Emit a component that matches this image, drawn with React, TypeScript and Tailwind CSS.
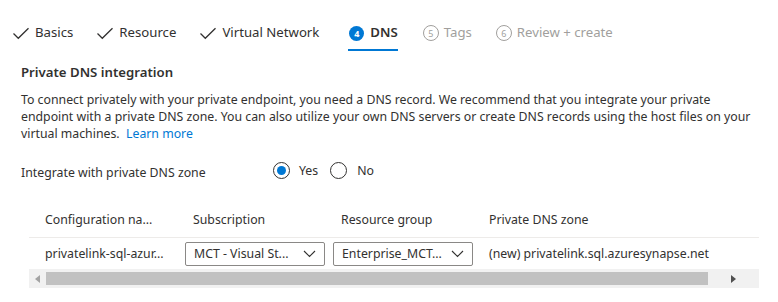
import React from "react";

const Check = () => (
  <svg width="16" height="13" viewBox="0 0 16 13" className="shrink-0">
    <path d="M0.5 6.5 L5.3 11.3 L15.5 1.2" fill="none" stroke="#323130" strokeWidth="1.3" />
  </svg>
);

const Chevron = () => (
  <svg width="13" height="8" viewBox="0 0 13 8" className="shrink-0">
    <path d="M1 1 L6.5 6.5 L12 1" fill="none" stroke="#323130" strokeWidth="1.1" />
  </svg>
);

function Dropdown({ text }: { text: string }) {
  return (
    <div className="flex h-[24px] w-[140px] items-center justify-between rounded-[2px] border border-[#8a8886] bg-white pl-[8px] pr-[8px]">
      <span className="truncate">{text}</span>
      <Chevron />
    </div>
  );
}

export default function App() {
  return (
    <div
      className="h-[302px] w-[778px] overflow-hidden bg-white text-[12.3px] text-[#323130]"
      style={{ fontFamily: '"Segoe UI", "Noto Sans", sans-serif' }}
    >
      {/* Tabs */}
      <div className="flex h-[51px] items-end pl-[13px] text-[13.2px]">
        <div className="flex items-center">
          <div className="flex h-[34px] items-center gap-[6px] border-b-2 border-transparent">
            <Check />
            <span>Basics</span>
          </div>
          <div className="ml-[24px] flex h-[34px] items-center gap-[6px] border-b-2 border-transparent">
            <Check />
            <span>Resource</span>
          </div>
          <div className="ml-[24px] flex h-[34px] items-center gap-[6px] border-b-2 border-transparent">
            <Check />
            <span>Virtual Network</span>
          </div>
          <div className="ml-[29px] flex h-[34px] items-center gap-[6px] border-b-2 border-[#0078d4] pl-[1px]">
            <span className="flex h-[15px] w-[15px] items-center justify-center rounded-full bg-[#0078d4] text-[9px] font-bold leading-none text-white">
              4
            </span>
            <span className="font-semibold">DNS</span>
          </div>
          <div className="ml-[25px] flex h-[34px] items-center gap-[5px] border-b-2 border-transparent text-[#a19f9d]">
            <span className="flex h-[16px] w-[16px] items-center justify-center rounded-full border border-[#a19f9d] text-[9px] leading-none">
              5
            </span>
            <span>Tags</span>
          </div>
          <div className="ml-[24px] flex h-[34px] items-center gap-[5px] border-b-2 border-transparent text-[#a19f9d]">
            <span className="flex h-[16px] w-[16px] items-center justify-center rounded-full border border-[#a19f9d] text-[9px] leading-none">
              6
            </span>
            <span>Review + create</span>
          </div>
        </div>
      </div>

      {/* Section */}
      <div className="pl-[21px]">
        <div className="mt-[12px] text-[13.2px] font-semibold leading-[18px]">Private DNS integration</div>
        <p className="mt-[10px] leading-[17px]">
          To connect privately with your private endpoint, you need a DNS record. We recommend that you integrate your private
          <br />
          endpoint with a private DNS zone. You can also utilize your own DNS servers or create DNS records using the host files on your
          <br />
          virtual machines.&nbsp;&nbsp;<span className="text-[#0078d4]">Learn more</span>
        </p>

        <div className="mt-[17px] flex items-center">
          <span className="mt-[5px] w-[252px]">Integrate with private DNS zone</span>
          <div className="flex items-center">
            <span className="flex h-[17px] w-[17px] items-center justify-center rounded-full border border-[#323130]">
              <span className="h-[9px] w-[9px] rounded-full bg-[#0078d4]" />
            </span>
            <span className="ml-[9px]">Yes</span>
            <span className="ml-[12px] h-[17px] w-[17px] rounded-full border border-[#323130]" />
            <span className="ml-[10px]">No</span>
          </div>
        </div>
      </div>

      {/* Table */}
      <div className="ml-[29px] mt-[21px] w-[730px]">
        <div className="flex h-[35px] items-center border-b border-[#edebe9] pl-[16px]">
          <div className="w-[148px] truncate">Configuration na...</div>
          <div className="w-[148px]">Subscription</div>
          <div className="w-[148px]">Resource group</div>
          <div>Private DNS zone</div>
        </div>
        <div className="flex h-[31px] items-center pl-[16px]">
          <div className="w-[140px] truncate">privatelink-sql-azur...</div>
          <div className="w-[148px]">
            <Dropdown text="MCT - Visual St..." />
          </div>
          <div className="w-[156px]">
            <Dropdown text="Enterprise_MCT..." />
          </div>
          <div>(new) privatelink.sql.azuresynapse.net</div>
        </div>
        {/* scrollbar */}
        <div className="flex h-[19px] items-center bg-[#f1f1f1]">
          <div className="flex w-[17px] items-center justify-center">
            <svg width="5" height="8" viewBox="0 0 5 8">
              <path d="M5 0 L0 4 L5 8 Z" fill="#a3a3a3" />
            </svg>
          </div>
          <div className="h-[13px] w-[662px] bg-[#c1c1c1]" />
          <div className="flex flex-1 items-center justify-center">
            <svg width="5" height="8" viewBox="0 0 5 8">
              <path d="M0 0 L5 4 L0 8 Z" fill="#505050" />
            </svg>
          </div>
        </div>
      </div>
    </div>
  );
}
